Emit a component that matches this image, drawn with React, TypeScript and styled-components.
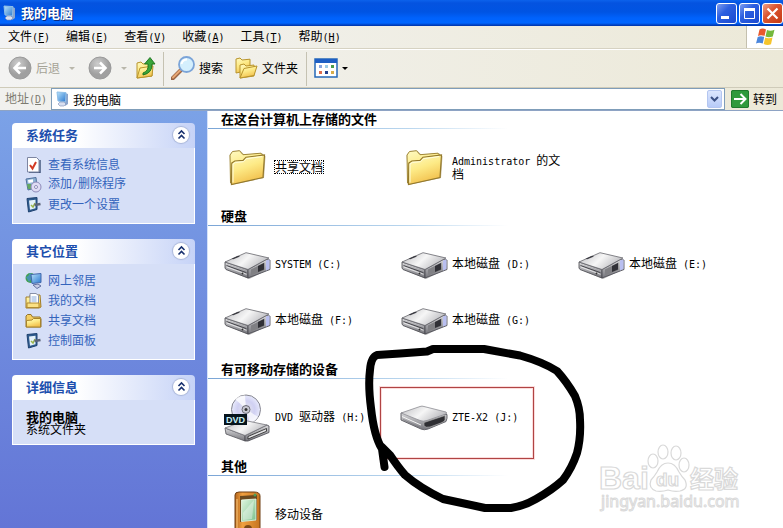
import React from "react";
import styled, { createGlobalStyle, css } from "styled-components";

const GlobalStyle = createGlobalStyle`
  * { box-sizing: border-box; }
  html, body { margin: 0; padding: 0; }
  body {
    font-family: "Noto Sans CJK SC", "Liberation Sans", sans-serif;
    font-size: 12px;
    line-height: 12px;
    color: #000;
    background: #fff;
  }
  h1, h2, p, ul { margin: 0; padding: 0; }
  ul { list-style: none; }
  button, input { font: inherit; color: inherit; padding: 0; margin: 0; border: 0; background: none; }
  svg { display: block; flex: none; }
`;

/* ---------- text ---------- */

const Latin = styled.span`
  font-family: "DejaVu Sans Mono", monospace;
  font-size: 10px;
  white-space: pre-wrap;
`;

function Mixed({ text }: { text: string }) {
  const parts = text.split(/([\x20-\x7e]+)/).filter(Boolean);
  return (
    <>
      {parts.map((p, i) => (/^[\x20-\x7e]/.test(p) ? <Latin key={i}>{p}</Latin> : <React.Fragment key={i}>{p}</React.Fragment>))}
    </>
  );
}

/* ---------- frame ---------- */

const Window = styled.div`
  display: flex;
  flex-direction: column;
  height: 100vh;
  overflow: hidden;
`;

const TitleBar = styled.header`
  display: flex;
  align-items: center;
  flex: none;
  height: 26px;
  padding-left: 3px;
  gap: 5px;
  background: linear-gradient(#0c62ec 0, #0453e0 3px, #0054e3 12px, #0062fc 18px, #0066ff 23px, #0040c0 25px, #0034a8 26px);
`;

const Title = styled.h1`
  flex: 1;
  padding-bottom: 1px;
  font-size: 13px;
  line-height: 16px;
  font-weight: 700;
  color: #fff;
  text-shadow: 1px 1px 0 #0a2a80;
`;

const Controls = styled.div`
  display: flex;
  gap: 2px;
`;

const ControlButton = styled.button<{ $danger?: boolean }>`
  width: 21px;
  height: 21px;
  border: 1px solid #fff;
  border-radius: 3px;
  background: ${(p) =>
    p.$danger
      ? "linear-gradient(135deg, #eba08a, #dc5632 40%, #c43a14)"
      : "linear-gradient(135deg, #7f9df0, #2c5fe0 40%, #1a49d0)"};
`;

const MenuRow = styled.div`
  display: flex;
  flex: none;
  height: 23px;
  background: linear-gradient(90deg, #f3f3f2, #ece9d8);
  border-bottom: 1px solid #d6d2c2;
`;

const Menu = styled.nav`
  display: flex;
  align-items: center;
  flex: 1;
  gap: 16px;
  padding-left: 8px;
`;

const MenuButton = styled.button`
  height: 20px;
  white-space: nowrap;
`;

const Mnemonic = styled.span`
  text-decoration: underline;
`;

const BrandBox = styled.div`
  display: flex;
  align-items: center;
  justify-content: center;
  width: 37px;
  background: #fff;
  border-left: 1px solid #c4c0ae;
`;

const Toolbar = styled.div`
  display: flex;
  align-items: center;
  flex: none;
  height: 39px;
  padding-left: 8px;
  background: linear-gradient(90deg, #f3f3f2, #ece9d8);
  border-top: 1px solid #fff;
  border-bottom: 1px solid #cfcbb9;
`;

const ToolButton = styled.button<{ $gap?: number; $muted?: boolean }>`
  display: flex;
  align-items: center;
  height: 32px;
  gap: 4px;
  margin-right: ${(p) => p.$gap ?? 0}px;
  padding-bottom: 1px;
  white-space: nowrap;
  ${(p) => p.$muted && css`color: #a5a397;`}
`;

const ToolArrow = styled.span<{ $dark?: boolean }>`
  border: solid transparent;
  border-width: 3px 3px 0;
  border-top-color: ${(p) => (p.$dark ? "#000" : "#b9b7ab")};
  margin-left: ${(p) => (p.$dark ? 0 : 5)}px;
`;

const ToolDivider = styled.span`
  width: 1px;
  height: 34px;
  margin: 0 7px;
  background: #c5c2b2;
`;

const AddressBar = styled.form`
  display: flex;
  align-items: center;
  flex: none;
  height: 22px;
  padding: 0 6px 0 5px;
  background: linear-gradient(90deg, #f1f1ee, #ece9d8);
`;

const AddressLabel = styled.label`
  color: #7d7b70;
  margin-right: 4px;
  white-space: nowrap;
`;

const AddressBox = styled.div`
  display: flex;
  align-items: center;
  flex: 1;
  height: 22px;
  padding: 0 2px 0 4px;
  gap: 4px;
  margin-right: 6px;
  background: #fff;
  border: 1px solid #7f9db9;
`;

const AddressInput = styled.input`
  flex: 1;
  min-width: 0;
  height: 18px;
  outline: none;
`;

const DropButton = styled.button`
  display: flex;
  align-items: center;
  justify-content: center;
  width: 15px;
  height: 18px;
  border-radius: 2px;
  border: 1px solid #b4c6f0;
  background: linear-gradient(#dce6fe, #b7cbf8);
`;

const GoButton = styled.button`
  display: flex;
  align-items: center;
  gap: 4px;
  white-space: nowrap;
`;

const Body = styled.div`
  display: flex;
  flex: 1;
  min-height: 0;
  border-top: 1px solid #8ea3c4;
`;

/* ---------- side panels ---------- */

const Sidebar = styled.aside`
  display: flex;
  flex-direction: column;
  flex: none;
  gap: 15px;
  width: 208px;
  padding: 12px 12px 0;
  border-right: 1px solid #d4e2fa;
  background: linear-gradient(#7ba2e7, #6375d6);
`;

const Panel = styled.section`
  border-radius: 4px 4px 0 0;
  overflow: hidden;
`;

const PanelHead = styled.div`
  display: flex;
  align-items: center;
  justify-content: space-between;
  height: 25px;
  padding: 0 6px 2px 14px;
  background: linear-gradient(90deg, #fff 35%, #c6d3f7);
`;

const PanelTitle = styled.h2`
  font-size: 13px;
  line-height: 16px;
  color: #1d4fae;
`;

const CollapseButton = styled.button`
  display: flex;
  align-items: center;
  justify-content: center;
  width: 16px;
  height: 16px;
  border-radius: 50%;
  background: #fff;
  box-shadow: 0 0 1px 1px #a9b6d8;
`;

const PanelBody = styled.div<{ $compact?: boolean }>`
  border: 1px solid #fff;
  border-top: 0;
  background: #d6dff7;
  padding: ${(p) => (p.$compact ? "10px 13px 9px" : "6px 12px 9px")};
  color: #000;
`;

const TaskLink = styled.a`
  display: flex;
  align-items: center;
  gap: 6px;
  height: 20px;
  color: #3464bc;
  text-decoration: none;
  white-space: nowrap;
`;

const DetailName = styled.p`
  font-size: 13px;
  line-height: 13px;
  font-weight: 700;
`;

/* ---------- content ---------- */

const Content = styled.main`
  position: relative;
  flex: 1;
  min-width: 0;
  overflow: hidden;
  background: #fff;
`;

const GroupTitle = styled.h2`
  height: 18px;
  padding-left: 13px;
  font-size: 13px;
  line-height: 16px;
  border-bottom: 1px solid;
  border-image: linear-gradient(90deg, #7aa5d6, #b9d6ee 200px, #fff 300px) 1;
`;

const Items = styled.ul`
  display: grid;
  grid-template-columns: repeat(auto-fill, 177px);
  padding: 11px 0 12px 14px;
`;

const Item = styled.li`
  display: flex;
  align-items: center;
  height: 56px;
  gap: 3px;
`;

const ItemIcon = styled.span`
  display: flex;
  justify-content: center;
  width: 50px;
`;

const ItemLabel = styled.span<{ $focused?: boolean }>`
  max-width: 110px;
  margin-bottom: 2px;
  line-height: 12px;
  ${(p) => p.$focused && css`outline: 1px dotted #000;`}
`;

const Scribble = styled.svg`
  position: absolute;
  left: 152px;
  top: 229px;
`;

const Watermark = styled.svg`
  position: absolute;
  right: 38px;
  bottom: 12px;
`;

/* ---------- drawings ---------- */

const GradientHost = styled.svg`
  position: absolute;
`;

function Gradients() {
  return (
    <GradientHost width="0" height="0" aria-hidden>
      <defs>
        <linearGradient id="gold" x1="0" y1="0" x2="0.4" y2="1">
          <stop offset="0" stopColor="#fffbc4" />
          <stop offset="0.5" stopColor="#fdea86" />
          <stop offset="1" stopColor="#f2c14e" />
        </linearGradient>
        <linearGradient id="steel" x1="0" y1="0" x2="1" y2="0.4">
          <stop offset="0" stopColor="#bcbcc0" />
          <stop offset="0.55" stopColor="#f6f6f6" />
          <stop offset="1" stopColor="#bebec2" />
        </linearGradient>
        <linearGradient id="side" x1="0" y1="0" x2="0" y2="1">
          <stop offset="0" stopColor="#d8d8da" />
          <stop offset="1" stopColor="#75757b" />
        </linearGradient>
        <radialGradient id="disc">
          <stop offset="0" stopColor="#e6e6ee" />
          <stop offset="0.6" stopColor="#d0d0f2" />
          <stop offset="1" stopColor="#e8eafc" />
        </radialGradient>
        <radialGradient id="nav" cx="0.4" cy="0.3">
          <stop offset="0" stopColor="#cdcdcd" />
          <stop offset="1" stopColor="#a0a0a0" />
        </radialGradient>
        <linearGradient id="screen" x1="0" y1="0" x2="1" y2="1">
          <stop offset="0" stopColor="#b8e2fb" />
          <stop offset="1" stopColor="#2a78cf" />
        </linearGradient>
        <linearGradient id="orange" x1="0" y1="0" x2="1" y2="0">
          <stop offset="0" stopColor="#b5661d" />
          <stop offset="0.3" stopColor="#f0a040" />
          <stop offset="1" stopColor="#c67420" />
        </linearGradient>
        <linearGradient id="glass" x1="0" y1="0" x2="1" y2="1">
          <stop offset="0" stopColor="#def5df" />
          <stop offset="1" stopColor="#7cc08c" />
        </linearGradient>
      </defs>
    </GradientHost>
  );
}

const Computer = () => (
  <svg width="13" height="16" viewBox="0 0 13 16">
    <path d="M9 2l3 1v10l-3 2z" fill="#8aa4cc" />
    <path d="M1 1l9 .6-.5 9.4L2 10z" fill="url(#screen)" stroke="#8fbfe8" />
    <path d="M4 11h4l2 2-2 2H4l-2-2z" fill="#d8dff0" stroke="#7a8cb4" strokeWidth=".6" />
  </svg>
);

const Folder = ({ size = 37 }: { size?: number }) => (
  <svg width={size} height={size} viewBox="0 0 37 37">
    <path d="M2 35L.7 5.500 3 2l8-1.500L15 4.500l18-1.300 3.500 3L35 28z" fill="#8b7434" opacity=".55" />
    <path d="M1.500 33L1 5l2.500-3.500 7-.8 3.500 4 18-1.500 2 2.500-1 21z" fill="url(#gold)" stroke="#a08738" />
    <path d="M2.500 34.500L2.800 13l3-2 8.200-.6 3-3.200L35.500 5 34 27.500z" fill="url(#gold)" stroke="#94792c" strokeWidth="1.200" />
    <path d="M4 32.500L4 14l2.500-1.600 8-.7 3-3L33 6.600" fill="none" stroke="#fffde0" />
  </svg>
);

const Drive = () => (
  <svg width="47" height="27" viewBox="0 0 47 27">
    <path d="M1 17l23 9 22-9-21 10z" fill="#000" opacity=".3" />
    <path d="M1 10L24 17.500V26L2 17.500 1 16z" fill="url(#side)" stroke="#44444a" strokeWidth=".8" />
    <path d="M24 17.500L42 7.500l4 .5v9.500L24 26z" fill="url(#side)" stroke="#44444c" strokeWidth=".8" />
    <path d="M1 10L22 .7 45 6 24 17.500z" fill="url(#steel)" stroke="#66666c" strokeWidth=".8" />
    <path d="M42 8.500l3.500-1V17L42 18.500z" fill="#b9bff0" />
    <path d="M27 17.500l13.500-7v7.500L27 23.500z" fill="#808084" />
    <path d="M34 14l6-3v6.500l-6 2.500z" fill="#303036" />
    <path d="M7.500 6.700L14 3.800l2 .6L9.300 7.300z" fill="#3b3b42" />
    <path d="M2.500 13.500l20 7.200" stroke="#44444a" />
    <path d="M3 15l19.500 7.300" stroke="#fff" strokeWidth=".7" />
    <circle cx="18.500" cy="21.500" r=".9" fill="#333" />
  </svg>
);

const Removable = () => (
  <svg width="48" height="26" viewBox="0 0 48 26">
    <path d="M1 8v7l20 9q3 1.500 7 0l18-7.500q1.500-3 1-7z" fill="url(#side)" stroke="#66666c" />
    <path d="M1 8L20 1.500q2-.8 4 0L46 7q1.500 1 0 2L27 15.500q-4 1.500-7 0z" fill="url(#steel)" stroke="#8d8d93" strokeWidth=".8" />
    <path d="M24 17.500l21-7v4.500q-1 2-4 3l-11 4q-4 1-6-1z" fill="#2f2f33" stroke="#aaa" strokeWidth=".7" />
    <path d="M2 11.500l19 8.500" stroke="#f6f6f6" />
    <path d="M3 14.500l17 8" stroke="#77777c" strokeWidth=".7" />
  </svg>
);

const DvdText = styled.text`
  font: 700 9px "Liberation Sans", sans-serif;
`;

const Dvd = () => (
  <svg width="46" height="48" viewBox="0 0 46 48">
    <circle cx="22" cy="15.500" r="14.500" fill="url(#disc)" stroke="#85858f" />
    <path d="M22 15L11 5q5-4 10-3.500z" fill="#fff" opacity=".8" />
    <path d="M22 15l12 8q-4 6-8 6z" fill="#fff" opacity=".7" />
    <circle cx="22" cy="15.500" r="4" fill="#c8c8d2" stroke="#6c6c78" />
    <circle cx="22" cy="15.500" r="1.500" fill="#333" />
    <path d="M1 34l20 7.500V47L2 40z" fill="url(#side)" stroke="#55555c" strokeWidth=".8" />
    <path d="M21 41.500L43 31l2 1v6.500L24 47h-3z" fill="url(#side)" stroke="#44444c" strokeWidth=".8" />
    <path d="M1 34l20-7.500L43 31 21 41.500z" fill="url(#steel)" stroke="#77777e" strokeWidth=".8" />
    <path d="M24 42.500l18.500-8v2.800L24 45z" fill="#e4e4e6" stroke="#222" strokeWidth=".8" />
    <rect x="0" y="20" width="23" height="11" fill="#07141c" />
    <DvdText x="2" y="29" fill="#c8f0f6">DVD</DvdText>
  </svg>
);

const Handheld = () => (
  <svg width="28" height="48" viewBox="0 0 28 48">
    <path d="M2 4q0-3 4-3h15q6 0 6 4v38q0 4-4 4H6q-4 0-4-4z" fill="url(#orange)" stroke="#6e3f14" />
    <path d="M7 5l17-1v25L7 31z" fill="#6a4a20" />
    <path d="M8.500 9L23 8v21l-14.500 1.500z" fill="url(#glass)" stroke="#efffee" strokeWidth=".8" />
    <path d="M10 22L21 9l-2 19-9 1z" fill="#fff" opacity=".35" />
    <circle cx="22" cy="4" r="1.500" fill="#4e9d58" />
    <path d="M4 8v34" stroke="#ffce80" />
    <circle cx="15" cy="38" r="4" fill="#7c4a18" />
  </svg>
);

const Nav = ({ back }: { back?: boolean }) => (
  <svg width="24" height="24" viewBox="0 0 24 24">
    <circle cx="12" cy="12" r="11" fill="url(#nav)" stroke="#9a9a9a" />
    <path
      d={back ? "M18 12H7M12 6.500L6.500 12l5.500 5.500" : "M6 12h11M12 6.500l5.500 5.500-5.500 5.500"}
      fill="none"
      stroke="#fff"
      strokeWidth="2.500"
    />
  </svg>
);

const FolderUp = () => (
  <svg width="20" height="24" viewBox="0 0 20 24">
    <path d="M1 22V7l4-1 2 2 9-1v13z" fill="url(#gold)" stroke="#b8942c" />
    <path d="M1 22l3-10 13-2-1 10z" fill="url(#gold)" stroke="#b8942c" />
    <path d="M7 17q6-2 5-9H8.500L14 1.500 19 8h-3q.5 9-9 11z" fill="#3aa53a" stroke="#18701c" strokeWidth=".9" />
  </svg>
);

const Search = () => (
  <svg width="24" height="24" viewBox="0 0 24 24">
    <path d="M1.500 22.500l8-8" stroke="#9a6444" strokeWidth="4" strokeLinecap="round" />
    <path d="M2 21.500l7-7" stroke="#e8a874" strokeWidth="2" strokeLinecap="round" />
    <circle cx="15.500" cy="8.500" r="7.500" fill="#d4effd" stroke="#7ba4d8" strokeWidth="1.800" />
    <path d="M10.500 8q1-4.500 5.500-4.500" stroke="#fff" strokeWidth="2" fill="none" />
  </svg>
);

const Folders = () => (
  <svg width="23" height="22" viewBox="0 0 23 22">
    <path d="M1 16V2l4-1 2 2 8-.8V13z" fill="url(#gold)" stroke="#b8942c" />
    <path d="M5 21V8l4-1 2 2 8-1v11z" fill="url(#gold)" stroke="#b8942c" />
    <path d="M5 21l4-9.500L22 9l-3 9.500z" fill="url(#gold)" stroke="#b8942c" />
  </svg>
);

const Views = () => (
  <svg width="24" height="20" viewBox="0 0 24 20">
    <rect x="1" y="1" width="22" height="18" fill="#fff" stroke="#2468b8" strokeWidth="1.500" />
    <rect x="1" y="1" width="22" height="4" fill="#1e5fc4" />
    <path d="M5 7h3v3H5z" fill="#8aa6e0" />
    <path d="M11 7h3v3h-3z" fill="#9ccbe6" />
    <path d="M17 7h3v3h-3z" fill="#4a9c4a" />
    <path d="M5 13h3v3H5z" fill="#dd6c4c" />
    <path d="M11 13h3v3h-3z" fill="#24408c" />
    <path d="M17 13h3v3h-3z" fill="#d8ad4a" />
  </svg>
);

const Flag = () => (
  <svg width="20" height="18" viewBox="0 0 20 18">
    <path d="M4.500 1.500q3-2 6.500 0L9.500 8q-3.500-1.500-6.500 0z" fill="#e8582c" />
    <path d="M12 2q3.500 1.500 7.500-.3L17.800 8.500q-4 1.500-7.300 0z" fill="#74b83c" />
    <path d="M2.700 9q3-1.500 6.500 0L7.700 15.500Q4 14 1 15.500z" fill="#4a86dc" />
    <path d="M10.200 9.500q3.500 1.500 7.300 0L16 16.300q-3.700 1.500-7.300-.3z" fill="#f6c52c" />
  </svg>
);

const GoIcon = () => (
  <svg width="18" height="18" viewBox="0 0 18 18">
    <rect width="18" height="18" rx="2" fill="#2f9a3c" />
    <rect x=".5" y=".5" width="17" height="17" rx="1.500" fill="none" stroke="#1f7a2c" />
    <path d="M3 9h11M9.500 4L14.500 9l-5 5" fill="none" stroke="#fff" strokeWidth="2" />
  </svg>
);

const InfoIcon = () => (
  <svg width="17" height="17" viewBox="0 0 17 17">
    <path d="M4 16.500h11V4" stroke="#44587e" strokeWidth="1.500" fill="none" />
    <path d="M2.500 1.500h9L14 4v12H2.500z" fill="#fff" stroke="#7d86a2" />
    <path d="M5 9l2.500 3.500L11 6" fill="none" stroke="#d23a24" strokeWidth="2" />
  </svg>
);

const ProgramsIcon = () => (
  <svg width="17" height="17" viewBox="0 0 17 17">
    <path d="M1 3l10-1.500 1 10L3 14z" fill="#8fb4d4" stroke="#50709c" />
    <path d="M3 4l5-.7v3l-4.500.7z" fill="#fff" />
    <path d="M2 8h4v5H3z" fill="#63a860" />
    <circle cx="11" cy="11" r="5" fill="#dfdcf4" stroke="#8d8ab8" />
    <circle cx="11" cy="11" r="1.500" fill="#fff" stroke="#8d8ab8" />
  </svg>
);

const SettingsIcon = () => (
  <svg width="17" height="17" viewBox="0 0 17 17">
    <path d="M2 2.500l10-1v12L3.500 16z" fill="#2e5b8e" stroke="#1f4270" />
    <path d="M4 4.500l6.500-.7v8.500L5 13.800z" fill="#e4f1fa" />
    <path d="M6 9l2 2 2-4" fill="none" stroke="#9cb54a" strokeWidth="1.500" />
    <path d="M9.500 9l6-1" stroke="#5c6478" strokeWidth="2.500" />
  </svg>
);

const NetworkIcon = () => (
  <svg width="17" height="17" viewBox="0 0 17 17">
    <circle cx="5.500" cy="6" r="5" fill="#42a052" />
    <path d="M1 5q3-1 4-4 3 1 3 4l-4 5z" fill="#4a8fdc" opacity=".7" />
    <path d="M6 2.500l10-1v9l-9 1z" fill="url(#screen)" stroke="#4468ac" />
    <path d="M8 13l5-1 3 2-4 2.500z" fill="#c8cce4" stroke="#6470a0" />
  </svg>
);

const DocumentsIcon = () => (
  <svg width="17" height="17" viewBox="0 0 17 17">
    <path d="M1 5h4V3h10l1 12-2 1H1z" fill="url(#gold)" stroke="#a07c28" />
    <path d="M5 1.500h6l2.500 2V12H5z" fill="#fff" stroke="#8890a8" />
    <path d="M6.500 5h5M6.500 7h5M6.500 9h5" stroke="#88aadc" />
    <path d="M2 11h12v4.500H2z" fill="#fbe184" stroke="#b08b30" />
  </svg>
);

const SmallFolder = () => (
  <svg width="17" height="17" viewBox="0 0 17 17">
    <path d="M1 15V4l1.500-1.500H6L7.500 5H15l1 2v8z" fill="#f5cf62" stroke="#94742a" />
    <path d="M1.500 15V8.500L7 8l1.500-1.500H15.500V15z" fill="url(#gold)" stroke="#a8852c" />
  </svg>
);

const Chevrons = () => (
  <svg width="9" height="11" viewBox="0 0 9 11">
    <path d="M1.500 5l3-3 3 3M1.500 9.500l3-3 3 3" fill="none" stroke="#17306e" strokeWidth="1.600" />
  </svg>
);

const LogoText = styled.text`
  font: 700 32px "Liberation Sans", "Noto Sans CJK SC", sans-serif;
`;
const LogoSmall = styled.text`
  font: 700 19px "Liberation Sans", sans-serif;
`;
const LogoCjk = styled.text`
  font: 700 24px "Noto Sans CJK SC", sans-serif;
`;
const LogoUrl = styled.text`
  font: 400 16px "Noto Sans", sans-serif;
`;

/* ---------- data ---------- */

const menus = [
  ["文件", "F"],
  ["编辑", "E"],
  ["查看", "V"],
  ["收藏", "A"],
  ["工具", "T"],
  ["帮助", "H"],
];

const panels = [
  {
    title: "系统任务",
    links: [
      { icon: <InfoIcon />, text: "查看系统信息" },
      { icon: <ProgramsIcon />, text: "添加/删除程序" },
      { icon: <SettingsIcon />, text: "更改一个设置" },
    ],
  },
  {
    title: "其它位置",
    links: [
      { icon: <NetworkIcon />, text: "网上邻居" },
      { icon: <DocumentsIcon />, text: "我的文档" },
      { icon: <SmallFolder />, text: "共享文档" },
      { icon: <SettingsIcon />, text: "控制面板" },
    ],
  },
];

const groups = [
  {
    title: "在这台计算机上存储的文件",
    items: [
      { icon: <Folder />, text: "共享文档", focused: true },
      { icon: <Folder />, text: "Administrator 的文档" },
    ],
  },
  {
    title: "硬盘",
    items: [
      { icon: <Drive />, text: "SYSTEM (C:)" },
      { icon: <Drive />, text: "本地磁盘 (D:)" },
      { icon: <Drive />, text: "本地磁盘 (E:)" },
      { icon: <Drive />, text: "本地磁盘 (F:)" },
      { icon: <Drive />, text: "本地磁盘 (G:)" },
    ],
  },
  {
    title: "有可移动存储的设备",
    items: [
      { icon: <Dvd />, text: "DVD 驱动器 (H:)" },
      { icon: <Removable />, text: "ZTE-X2 (J:)" },
    ],
  },
  { title: "其他", items: [{ icon: <Handheld />, text: "移动设备" }] },
] as { title: string; items: { icon: React.ReactNode; text: string; focused?: boolean }[] }[];

function PanelHeader({ title }: { title: string }) {
  return (
    <PanelHead>
      <PanelTitle>{title}</PanelTitle>
      <CollapseButton aria-label={`折叠 ${title}`}>
        <Chevrons />
      </CollapseButton>
    </PanelHead>
  );
}

export default function App() {
  return (
    <Window>
      <GlobalStyle />
      <Gradients />
      <TitleBar>
        <Computer />
        <Title>我的电脑</Title>
        <Controls>
          <ControlButton aria-label="最小化">
            <svg width="19" height="19" viewBox="0 0 19 19">
              <path d="M4 12h8v3H4z" fill="#fff" />
            </svg>
          </ControlButton>
          <ControlButton aria-label="最大化">
            <svg width="19" height="19" viewBox="0 0 19 19">
              <path d="M4.500 5h10v9.500h-10z" fill="none" stroke="#fff" />
              <path d="M4 4h11v3H4z" fill="#fff" />
            </svg>
          </ControlButton>
          <ControlButton $danger aria-label="关闭">
            <svg width="19" height="19" viewBox="0 0 19 19">
              <path d="M4.500 4.500l10 10M14.500 4.500l-10 10" stroke="#fff" strokeWidth="2.200" />
            </svg>
          </ControlButton>
        </Controls>
      </TitleBar>

      <MenuRow>
        <Menu>
          {menus.map(([name, key]) => (
            <MenuButton key={key}>
              {name}
              <Latin>
                (<Mnemonic>{key}</Mnemonic>)
              </Latin>
            </MenuButton>
          ))}
        </Menu>
        <BrandBox>
          <Flag />
        </BrandBox>
      </MenuRow>

      <Toolbar>
        <ToolButton $muted $gap={13}>
          <Nav back />
          后退
          <ToolArrow />
        </ToolButton>
        <ToolButton $muted $gap={9} aria-label="前进">
          <Nav />
          <ToolArrow />
        </ToolButton>
        <ToolButton aria-label="向上">
          <FolderUp />
        </ToolButton>
        <ToolDivider />
        <ToolButton $gap={12}>
          <Search />
          搜索
        </ToolButton>
        <ToolButton $gap={1}>
          <Folders />
          文件夹
        </ToolButton>
        <ToolDivider />
        <ToolButton aria-label="视图">
          <Views />
          <ToolArrow $dark />
        </ToolButton>
      </Toolbar>

      <AddressBar onSubmit={(e) => e.preventDefault()}>
        <AddressLabel htmlFor="address">
          地址
          <Latin>
            (<Mnemonic>D</Mnemonic>)
          </Latin>
        </AddressLabel>
        <AddressBox>
          <Computer />
          <AddressInput id="address" defaultValue="我的电脑" />
          <DropButton type="button" aria-label="展开地址列表">
            <svg width="9" height="6" viewBox="0 0 9 6">
              <path d="M1 1l3.500 3.500L8 1" fill="none" stroke="#3c5184" strokeWidth="2" />
            </svg>
          </DropButton>
        </AddressBox>
        <GoButton type="submit">
          <GoIcon />
          转到
        </GoButton>
      </AddressBar>

      <Body>
        <Sidebar>
          {panels.map((panel) => (
            <Panel key={panel.title}>
              <PanelHeader title={panel.title} />
              <PanelBody>
                {panel.links.map((link) => (
                  <TaskLink href="#" key={link.text}>
                    {link.icon}
                    <span>
                      <Mixed text={link.text} />
                    </span>
                  </TaskLink>
                ))}
              </PanelBody>
            </Panel>
          ))}
          <Panel>
            <PanelHeader title="详细信息" />
            <PanelBody $compact>
              <DetailName>我的电脑</DetailName>
              <p>系统文件夹</p>
            </PanelBody>
          </Panel>
        </Sidebar>

        <Content>
          {groups.map((group) => (
            <section key={group.title}>
              <GroupTitle>{group.title}</GroupTitle>
              <Items>
                {group.items.map((item) => (
                  <Item key={item.text}>
                    <ItemIcon>{item.icon}</ItemIcon>
                    <ItemLabel $focused={item.focused}>
                      <Mixed text={item.text} />
                    </ItemLabel>
                  </Item>
                ))}
              </Items>
            </section>
          ))}
          <Scribble width="232" height="180" viewBox="360 340 232 180" fill="none" aria-hidden>
            <rect x="380.500" y="387.500" width="153" height="71" stroke="#f7c4c4" strokeWidth="3" opacity=".6" />
            <rect x="380.500" y="387.500" width="153" height="71" stroke="#b04444" />
            <path
              d="M384.500 467L382 449Q374 436 371 408Q368 385 370 370Q371 357 377 355L400 353.500L427 351.500L433 349L484 349L520 355.500Q543 362 557 371Q567 382 575 396Q580 408 580 420Q581 438 577 453Q572 468 563 480Q552 490 536 499Q524 506 511 508L485 508L443 499Q420 488 405 475Q398 467 390 455L382 447"
              stroke="#000"
              strokeWidth="8"
              strokeLinejoin="round"
              strokeLinecap="round"
            />
          </Scribble>
          <Watermark width="146" height="74" viewBox="0 0 146 74" fill="#fff" stroke="#d9d9d9" strokeWidth="1.200" aria-hidden>
            <LogoText x="0" y="47">Bai</LogoText>
            <path d="M69 21q7 0 11 9 3 5 6 8 4 9-5 11-6 1-12-1-6 2-12 1-8-3-5-11 3-3 6-8 4-9 11-9z" />
            <ellipse cx="54" cy="19" rx="5" ry="7" />
            <ellipse cx="64" cy="10" rx="5" ry="7" />
            <ellipse cx="77" cy="11" rx="5" ry="7" />
            <ellipse cx="85" cy="23" rx="5" ry="7" />
            <LogoSmall x="57" y="44">du</LogoSmall>
            <LogoCjk x="91" y="46">经验</LogoCjk>
            <LogoUrl x="2" y="65" strokeWidth="1">
              jingyan.baidu.com
            </LogoUrl>
          </Watermark>
        </Content>
      </Body>
    </Window>
  );
}
